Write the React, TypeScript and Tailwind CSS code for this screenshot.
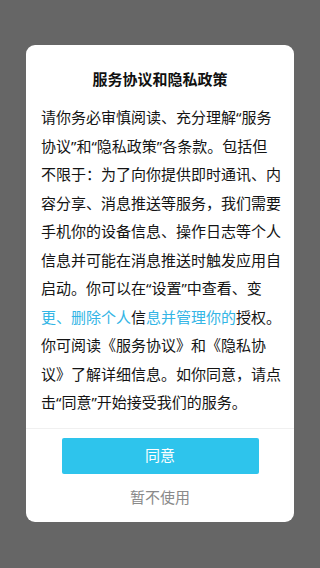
import React from "react";

const lines: Array<Array<[string, boolean]>> = [
  [["请你务必审慎阅读、充分理解“服务", false]],
  [["协议”和“隐私政策”各条款。包括但", false]],
  [["不限于：为了向你提供即时通讯、内", false]],
  [["容分享、消息推送等服务，我们需要", false]],
  [["手机你的设备信息、操作日志等个人", false]],
  [["信息并可能在消息推送时触发应用自", false]],
  [["启动。你可以在“设置”中查看、变", false]],
  [
    ["更、删除个人", true],
    ["信", false],
    ["息并管理你的", true],
    ["授权。", false],
  ],
  [["你可阅读《服务协议》和《隐私协", false]],
  [["议》了解详细信息。如你同意，请点", false]],
  [["击“同意”开始接受我们的服务。", false]],
];

export default function App() {
  return (
    <div
      className="w-[320px] h-[568px] bg-[#666666] flex flex-col items-center pt-[45px]"
      style={{ fontFamily: '"Noto Sans", "Noto Sans CJK SC", sans-serif' }}
    >
      <div className="w-[268px] h-[477px] bg-white rounded-[9px] flex flex-col">
        <div className="pt-[23px] text-center text-[15px] leading-[22px] font-bold text-[#111111]">
          服务协议和隐私政策
        </div>
        <div className="mt-[13px] px-[15px] text-[15px] leading-[28.5px] text-[#141414]">
          {lines.map((segs, i) => (
            <div key={i} className="whitespace-nowrap">
              {segs.map(([t, blue], j) => (
                <span key={j} className={blue ? "text-[#33b5e5]" : ""}>
                  {t}
                </span>
              ))}
            </div>
          ))}
        </div>
        <div className="mt-[11px] h-px bg-[#f0f0f0]" />
        <div className="mt-[9px] flex justify-center">
          <button className="w-[197px] h-[36px] bg-[#2ec4ec] rounded-[2px] text-white text-[15px]">
            同意
          </button>
        </div>
        <div className="mt-[12px] text-center text-[15px] leading-[22px] text-[#8a8a8a]">
          暂不使用
        </div>
      </div>
    </div>
  );
}
